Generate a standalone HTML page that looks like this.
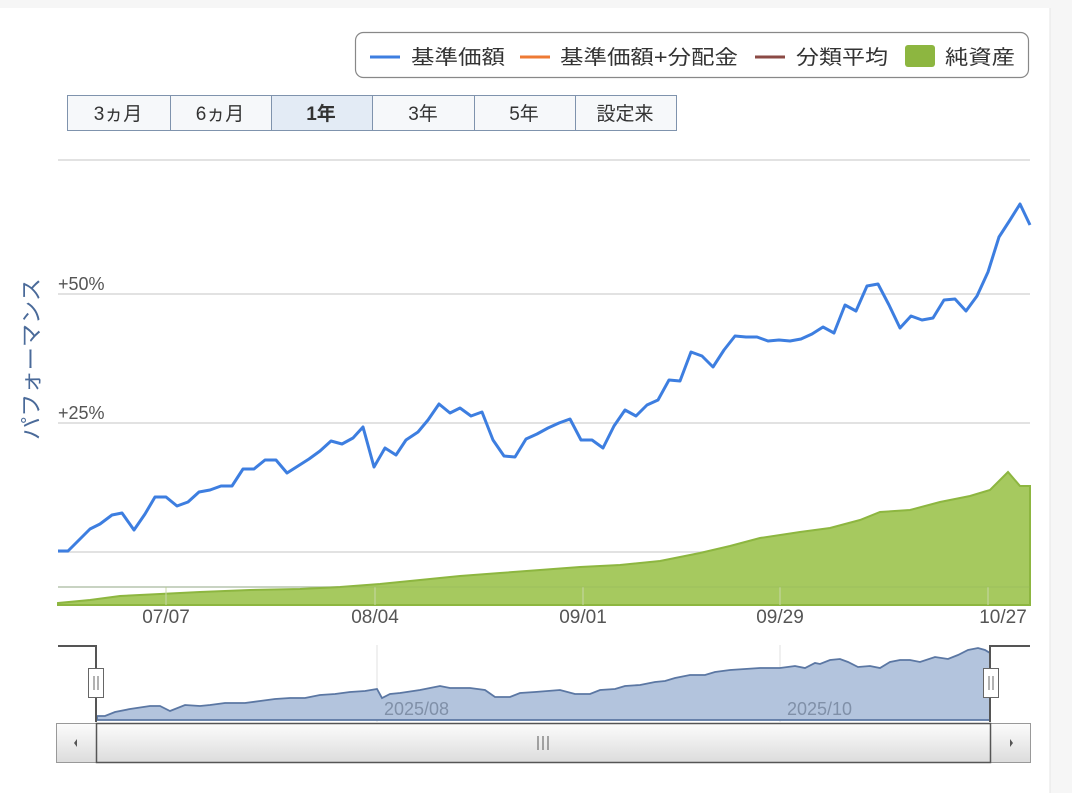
<!DOCTYPE html>
<html><head><meta charset="utf-8"><style>
body{margin:0;width:1072px;height:793px;background:#fff;overflow:hidden;font-family:"Liberation Sans","Noto Sans CJK JP",sans-serif;}
</style></head><body>
<svg width="1072" height="793" xmlns="http://www.w3.org/2000/svg" style="position:absolute;left:0;top:0;font-family:'Liberation Sans','Noto Sans CJK JP',sans-serif">
<rect x="0" y="0" width="1072" height="8" fill="#f6f6f6"/>
<rect x="1050" y="8" width="22" height="785" fill="#f6f6f6"/>
<line x1="1050" y1="8" x2="1050" y2="793" stroke="#e6e6e6"/>
<!-- legend -->
<rect x="355.5" y="32.5" width="673" height="45" rx="8" fill="#fff" stroke="#888" stroke-width="1.2"/>
<line x1="370" y1="57" x2="400" y2="57" stroke="#3d7ee0" stroke-width="3"/>
<text x="411" y="64" font-size="20" fill="#333" textLength="94" lengthAdjust="spacingAndGlyphs">基準価額</text>
<line x1="520" y1="57" x2="550" y2="57" stroke="#ee7a34" stroke-width="3"/>
<text x="560" y="64" font-size="20" fill="#333" textLength="178" lengthAdjust="spacingAndGlyphs">基準価額+分配金</text>
<line x1="755" y1="57" x2="785" y2="57" stroke="#8b4a45" stroke-width="3"/>
<text x="796" y="64" font-size="20" fill="#333" textLength="92" lengthAdjust="spacingAndGlyphs">分類平均</text>
<rect x="905" y="45" width="30" height="22" rx="3" fill="#8db640"/>
<text x="945" y="64" font-size="20" fill="#333" textLength="70" lengthAdjust="spacingAndGlyphs">純資産</text>
<!-- range buttons -->
<g font-size="19" fill="#333" text-anchor="middle">
<rect x="67.5" y="95.5" width="609" height="35" fill="#f6f8fa" stroke="#7f93ad"/>
<rect x="271" y="96" width="101" height="34" fill="#e3ebf5"/>
<line x1="170.5" y1="96" x2="170.5" y2="130" stroke="#7f93ad"/>
<line x1="271.5" y1="96" x2="271.5" y2="130" stroke="#7f93ad"/>
<line x1="372.5" y1="96" x2="372.5" y2="130" stroke="#7f93ad"/>
<line x1="474.5" y1="96" x2="474.5" y2="130" stroke="#7f93ad"/>
<line x1="575.5" y1="96" x2="575.5" y2="130" stroke="#7f93ad"/>
<text x="118" y="120">3ヵ月</text><text x="220" y="120">6ヵ月</text>
<text x="321" y="120" font-weight="bold">1年</text><text x="423" y="120">3年</text>
<text x="524" y="120">5年</text><text x="625" y="120">設定来</text>
</g>
<!-- grid -->
<g stroke="#d8d8d8" stroke-width="1.5">
<line x1="58" y1="160" x2="1030" y2="160"/>
<line x1="58" y1="294" x2="1030" y2="294"/>
<line x1="58" y1="423" x2="1030" y2="423"/>
<line x1="58" y1="552" x2="1030" y2="552"/>
<line x1="58" y1="587" x2="1030" y2="587" stroke="#c8ced8"/>
</g>
<text x="58" y="290" font-size="18" fill="#555">+50%</text>
<text x="58" y="419" font-size="18" fill="#555">+25%</text>
<text transform="translate(39,359) rotate(-90)" font-size="22" fill="#4a6a99" text-anchor="middle" textLength="162" lengthAdjust="spacingAndGlyphs">パフォーマンス</text>
<!-- green area -->
<path d="M58,603 L90,600 L120,596 L160,594 L200,592 L250,590 L300,589 L340,587 L380,584 L420,580 L460,576 L500,573 L540,570 L580,567 L620,565 L660,561 L700,553 L730,546 L760,538 L800,532 L830,528 L860,520 L880,512 L910,510 L940,502 L970,496 L990,490 L1008,472 L1020,486 L1030,486 L1030,605 L58,605Z" fill="#a6c95f" stroke="#8db640" stroke-width="2"/>
<g stroke="#c8d8a8" stroke-width="1"><line x1="166" y1="587" x2="166" y2="605"/><line x1="375" y1="587" x2="375" y2="605"/><line x1="583" y1="587" x2="583" y2="605"/><line x1="780" y1="587" x2="780" y2="605"/><line x1="988" y1="587" x2="988" y2="605"/></g>
<line x1="58" y1="587" x2="1030" y2="587" stroke="#93b45a" stroke-width="1" opacity="0.5"/>
<!-- blue line -->
<polyline fill="none" stroke="#3d7ee0" stroke-width="3" stroke-linejoin="round" points="58,551 68,551 78,541 90,529 100,524 112,515 122,513 134,530 145,514 155,497 166,497 177,506 188,502 199,492 210,490 221,486 232,486 243,469 254,469 265,460 276,460 287,473 298,466 309,459 320,451 331,441 342,444 353,438 363,427 374,467 385,448 396,455 406,440 418,432 428,420 439,404 450,413 460,408 471,416 482,412 493,440 504,456 515,457 526,439 537,434 548,428 559,423 570,419 581,440 592,440 603,448 614,426 625,410 636,416 647,405 658,400 669,380 680,381 691,352 702,356 713,367 724,350 735,336 746,337 757,337 768,341 779,340 790,341 801,339 812,334 823,327 834,333 845,305 856,311 867,286 878,284 889,305 900,328 911,316 922,320 933,318 944,300 955,299 966,311 977,296 988,272 999,237 1010,220 1020,204 1030,225"/>
<g font-size="19" fill="#555" text-anchor="middle">
<text x="166" y="623">07/07</text><text x="375" y="623">08/04</text><text x="583" y="623">09/01</text><text x="780" y="623">09/29</text><text x="1003" y="623">10/27</text>
</g>
<!-- navigator -->
<line x1="377" y1="645" x2="377" y2="722" stroke="#e2e2e2"/>
<line x1="780" y1="645" x2="780" y2="722" stroke="#e2e2e2"/>
<path d="M97,716 L105,716 L115,712 L130,709 L150,706 L160,706 L170,711 L185,705 L200,706 L210,705 L225,703 L245,703 L260,701 L275,699 L290,698 L305,698 L320,695 L335,694 L350,692 L365,691 L377,689 L382,698 L390,694 L400,693 L420,690 L440,686 L450,688 L470,688 L485,690 L495,697 L510,697 L520,693 L535,692 L560,690 L575,694 L590,694 L600,690 L615,689 L625,686 L640,685 L655,682 L665,681 L675,678 L690,675 L705,675 L715,672 L730,670 L745,669 L760,668 L780,668 L795,666 L805,668 L815,663 L820,664 L830,660 L840,659 L848,662 L858,667 L870,666 L880,668 L890,662 L900,660 L910,660 L920,662 L935,657 L948,659 L958,655 L968,650 L978,648 L985,650 L990,653 L990,720 L97,720Z" fill="#b3c4dd" stroke="#5b77a3" stroke-width="1.8"/>
<text x="384" y="715" font-size="18" fill="#8090a8">2025/08</text>
<text x="787" y="715" font-size="18" fill="#8090a8">2025/10</text>
<polyline points="58,646 96,646 96,722" fill="none" stroke="#555" stroke-width="2"/>
<polyline points="1030,646 990,646 990,722" fill="none" stroke="#555" stroke-width="2"/>
<rect x="88.5" y="668.5" width="15" height="29" fill="#fff" stroke="#666"/>
<line x1="94" y1="676" x2="94" y2="690" stroke="#666"/><line x1="98" y1="676" x2="98" y2="690" stroke="#666"/>
<rect x="983.5" y="668.5" width="15" height="29" fill="#fff" stroke="#666"/>
<line x1="989" y1="676" x2="989" y2="690" stroke="#666"/><line x1="993" y1="676" x2="993" y2="690" stroke="#666"/>
<!-- scrollbar -->
<defs><linearGradient id="g" x1="0" y1="0" x2="0" y2="1"><stop offset="0" stop-color="#fcfcfc"/><stop offset="1" stop-color="#dcdcdc"/></linearGradient></defs>
<rect x="56.5" y="723.5" width="974" height="39" fill="url(#g)" stroke="#999"/>
<rect x="96.5" y="723.5" width="894" height="39" fill="url(#g)" stroke="#555" stroke-width="1.5"/>
<line x1="538" y1="736" x2="538" y2="750" stroke="#555"/><line x1="543" y1="736" x2="543" y2="750" stroke="#555"/><line x1="548" y1="736" x2="548" y2="750" stroke="#555"/>
<path d="M77,739 L74,743 L77,747Z" fill="#555"/>
<path d="M1010,739 L1013,743 L1010,747Z" fill="#555"/>
</svg>
</body></html>
